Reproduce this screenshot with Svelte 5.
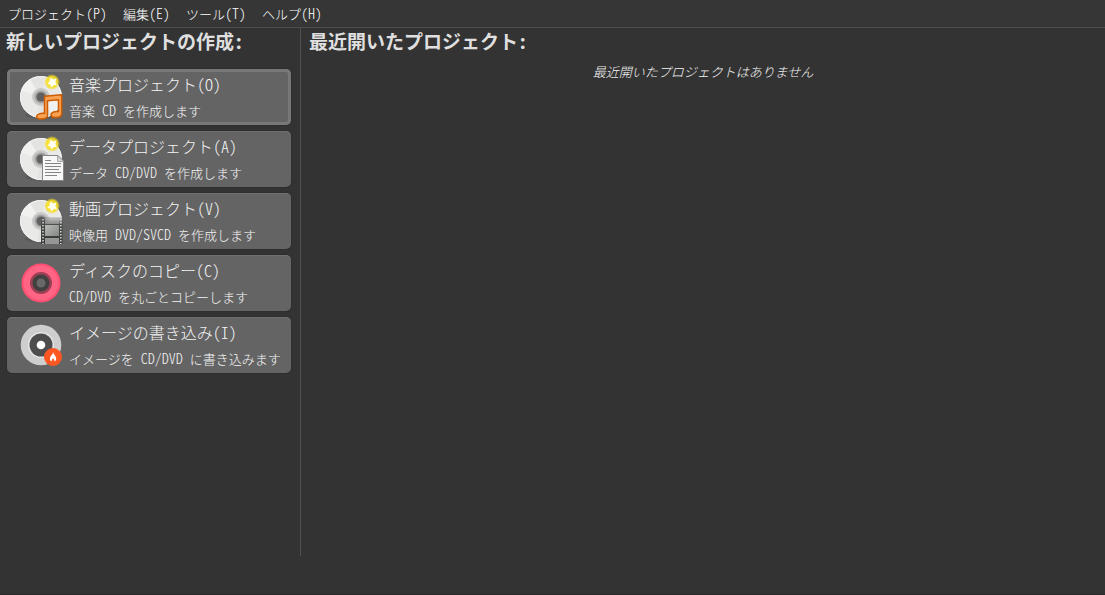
<script>
  const menus = [
    { label: 'プロジェクト', key: '(P)' },
    { label: '編集', key: '(E)' },
    { label: 'ツール', key: '(T)' },
    { label: 'ヘルプ', key: '(H)' }
  ];

  const tasks = [
    { icon: 'audio', title: '音楽プロジェクト', key: '(O)', parts: ['音楽', ' CD ', 'を作成します'] },
    { icon: 'data', title: 'データプロジェクト', key: '(A)', parts: ['データ', ' CD/DVD ', 'を作成します'] },
    { icon: 'video', title: '動画プロジェクト', key: '(V)', parts: ['映像用', ' DVD/SVCD ', 'を作成します'] },
    { icon: 'copy', title: 'ディスクのコピー', key: '(C)', parts: ['', 'CD/DVD ', 'を丸ごとコピーします'] },
    { icon: 'burn', title: 'イメージの書き込み', key: '(I)', parts: ['イメージを', ' CD/DVD ', 'に書き込みます'] }
  ];

  let selected = $state(0);
</script>

{#snippet disc()}
  <ellipse cx="24" cy="42" rx="16" ry="3.5" fill="#000" opacity="0.1" />
  <circle cx="24" cy="24" r="21" fill="#e9e9e7" />
  <path d="M24 24 4 17.500A21 21 0 0 1 13 6Z M24 24 44 30A21 21 0 0 1 35 42Z" fill="#f4f4f2" opacity="0.7" />
  <path d="M24 24 13 6A21 21 0 0 1 28 3.400Z M24 24 35 42A21 21 0 0 1 20 44.600Z" fill="#e0e0de" opacity="0.7" />
  <circle cx="24" cy="24" r="20.500" fill="none" stroke="#f2f2f0" />
  <circle cx="24" cy="24" r="9" fill="#c9c9c7" />
  <circle cx="24" cy="24" r="6.500" fill="#a3a3a3" />
  <circle cx="24" cy="24" r="4.500" fill="#606060" />
  <circle cx="35" cy="9" r="8" fill="url(#glow)" />
  <path d="M33.500 4.500 36 6.500 39.500 5.500 38.300 9 40 12 36.700 12 34.500 14.500 33.300 11.500 30.300 10.800 32.500 8.700Z" fill="#fffff4" />
{/snippet}

<svg class="defs" aria-hidden="true">
  <defs>
    <radialGradient id="glow">
      <stop offset="0" stop-color="#fff36a" />
      <stop offset="0.7" stop-color="#f6dd20" stop-opacity="0.9" />
      <stop offset="1" stop-color="#f3db2d" stop-opacity="0" />
    </radialGradient>
    <linearGradient id="film" x2="0" y2="1">
      <stop offset="0" stop-color="#4a4d4a" stop-opacity="0.15" />
      <stop offset="0.3" stop-color="#424542" />
      <stop offset="1" stop-color="#383b38" />
    </linearGradient>
    <linearGradient id="frame" x2="1" y2="1">
      <stop offset="0" stop-color="#b9bbb9" />
      <stop offset="1" stop-color="#858785" />
    </linearGradient>
  </defs>
</svg>

<div class="window">
  <nav class="menubar">
    {#each menus as menu}
      <button type="button" class="menu">{menu.label}<span class="latin">{menu.key}</span></button>
    {/each}
  </nav>

  <main>
    <section class="create">
      <h1>新しいプロジェクトの作成:</h1>
      <div class="tasks">
        {#each tasks as task, i}
          <button type="button" class="task" class:focused={selected === i} onclick={() => (selected = i)}>
            <svg viewBox="0 0 48 48" width="48" height="48" aria-hidden="true">
              {#if task.icon === 'audio'}
                {@render disc()}
                <path
                  d="M27.500 23.300 44.700 21.800V40.500C44.700 43 42 44.500 38.500 44.500C35.500 44.500 33.700 43.500 34 41.500C34.500 39.300 38 38 41.500 38.500V26.800L30.500 27.800V42.500C30.500 44.500 27.500 46 24 46C21 46 19.300 45 19.600 43.300C20 41 24 40 27.500 40.500Z"
                  fill="#f9a254"
                  stroke="#cc5c00"
                  stroke-width="1.500"
                  stroke-linejoin="round"
                />
              {:else if task.icon === 'data'}
                {@render disc()}
                <path d="M25.500 20.500H41L46.500 26V45.500H25.500Z" fill="#f7f7f7" stroke="#858585" />
                <path d="M40.500 20.500V26.500H46.500Z" fill="#d8d8d8" stroke="#999" stroke-width="0.800" />
                <path d="M28 25.500H34M28 28.500H44M28 31.500H44M28 34.500H42M28 37.500H44M28 40.500H40" stroke="#858585" />
              {:else if task.icon === 'video'}
                {@render disc()}
                <rect x="24" y="20" width="21.500" height="27" fill="url(#film)" />
                <rect x="28" y="21" width="14" height="6" fill="#bbb" opacity="0.5" />
                <rect x="28" y="28" width="14" height="11" fill="url(#frame)" />
                <rect x="28" y="41" width="14" height="6" fill="#959795" />
                <path d="M26 22V47M43.800 22V47" stroke="#d1d1d1" stroke-width="1.600" stroke-dasharray="1.500 1.500" />
              {:else if task.icon === 'copy'}
                <circle cx="24" cy="24" r="19.500" fill="#ff4f73" />
                <circle cx="24" cy="24" r="17.500" fill="#ff6484" />
                <circle cx="24" cy="24" r="11" fill="#9b4055" />
                <circle cx="24" cy="24" r="8.500" fill="#404040" />
                <circle cx="24" cy="24" r="4.500" fill="#686868" />
              {:else}
                <circle cx="24" cy="24" r="20.300" fill="#cecece" />
                <circle cx="24" cy="24" r="13" fill="#e5e5e5" />
                <circle cx="24" cy="24" r="11.500" fill="#4d4d4d" />
                <circle cx="24" cy="24" r="4.300" fill="#fff" />
                <circle cx="36" cy="36" r="9" fill="#ff5722" />
                <path d="M36.200 31C36 33.500 33 35 33 37.700C33 39 33.700 40 34.700 40.500C34.500 39 35.500 38 36.100 37.300C36.700 38 37.700 39 37.400 40.500C38.500 40 39.200 39 39.200 37.700C39.200 35 36.500 33.500 36.200 31Z" fill="#fff" />
              {/if}
            </svg>
            <span class="text">
              <span class="title">{task.title}{task.key}</span>
              <span class="detail">{task.parts[0]}<span class="latin">{task.parts[1]}</span>{task.parts[2]}</span>
            </span>
          </button>
        {/each}
      </div>
    </section>

    <section class="recent">
      <h1>最近開いたプロジェクト:</h1>
      <p>最近開いたプロジェクトはありません</p>
    </section>
  </main>
</div>

<style>
  :global(body) {
    margin: 0;
    background: #333;
  }

  .defs {
    position: absolute;
    width: 0;
    height: 0;
  }

  .window {
    display: flex;
    flex-direction: column;
    box-sizing: border-box;
    min-height: 100vh;
    padding-bottom: 38px;
    border-bottom: 1px solid #292929;
    background: #333;
    color: #f4f4f4;
    font-family: "Noto Sans CJK JP", sans-serif;
    font-feature-settings: "hwid";
    font-size: 13px;
    font-weight: 300;
    line-height: 20px;
  }

  button {
    margin: 0;
    border: 0;
    background: none;
    color: inherit;
    font: inherit;
    font-feature-settings: inherit;
    text-align: left;
  }

  .latin {
    font-size: 14px;
    line-height: 1;
    white-space: pre;
  }

  .menubar {
    display: flex;
    border-bottom: 1px solid #4e4e4e;
    background: #363636;
  }

  .menu {
    padding: 4px 8px 3px;
    color: #fff;
  }

  main {
    display: flex;
    flex: 1;
  }

  h1 {
    margin: 0;
    color: #dfdfdf;
    font-size: 19px;
    font-weight: 700;
    line-height: 26px;
    white-space: nowrap;
  }

  .create {
    flex: none;
    padding: 0 9px 0 6px;
    border-right: 1px solid #505050;
  }

  .tasks {
    display: flex;
    flex-direction: column;
    gap: 6px;
    width: 284px;
    padding: 15px 0 0 1px;
  }

  .task {
    display: flex;
    align-items: center;
    gap: 4px;
    box-sizing: border-box;
    padding: 4px 10px;
    border-radius: 5px;
    background: #646464;
    box-shadow: inset 0 1px #707070, 0 0 0 1px #2e2e2e;
  }

  .task.focused {
    box-shadow: inset 0 0 0 3px #787878, 0 0 0 1px #2e2e2e;
  }

  .task svg {
    flex: none;
  }

  .text {
    display: flex;
    flex-direction: column;
    gap: 6px;
    white-space: nowrap;
  }

  .title {
    font-size: 16px;
    line-height: 22px;
  }

  .recent {
    flex: 1;
    padding: 0 8px;
  }

  .recent p {
    margin: 8px 0 0;
    font-style: italic;
    text-align: center;
  }
</style>
